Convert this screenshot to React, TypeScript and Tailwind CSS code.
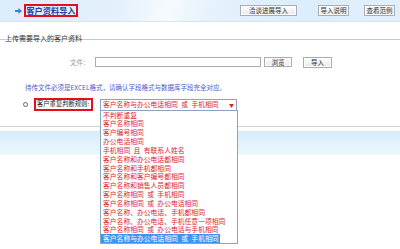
import React from "react";

const items = [
  "不判断重复",
  "客户名称相同",
  "客户编号相同",
  "办公电话相同",
  "手机相同\u2002且\u2002有联系人姓名",
  "客户名称和办公电话都相同",
  "客户名称和手机都相同",
  "客户名称和客户编号都相同",
  "客户名称和销售人员都相同",
  "客户名称相同\u2002或\u2002手机相同",
  "客户名称相同\u2002或\u2002办公电话相同",
  "客户名称、办公电话、手机都相同",
  "客户名称、办公电话、手机任意一项相同",
  "客户名称相同\u2002或\u2002办公电话与手机相同",
  "客户名称与办公电话相同\u2002或\u2002手机相同",
];

function Btn({ w, h = "h-[11px]", children }: { w: string; h?: string; children: React.ReactNode }) {
  return (
    <div
      className={`${w} ${h} flex items-center justify-center border border-[#a9adb3] bg-[linear-gradient(#ffffff,#e6e9ec)] text-[6.5px] leading-none text-[#333] shadow-[inset_0_0_0_1px_#ffffff]`}
    >
      {children}
    </div>
  );
}

export default function App() {
  return (
    <div className="relative h-[249px] w-[400px] overflow-hidden bg-white font-['Noto_Sans_CJK_SC','Liberation_Sans',sans-serif]">
      {/* header */}
      <div className="flex h-[22px] items-center border-b border-[#d4e6f6] bg-[linear-gradient(105deg,#dcedfb_0%,#e4f1fc_30%,#f6fbff_42%,#e6f2fc_52%,#dcedfb_75%,#e2f0fb_100%)]">
        <svg className="ml-[15px] h-[6px] w-[7px]" viewBox="0 0 7 6">
          <path d="M0 2h3.5V0L7 3 3.5 6V4H0z" fill="#2f86d8" />
        </svg>
        <div className="ml-[2px] flex h-[13px] w-[54px] items-center justify-center border-2 border-[#e3101c] text-[8.2px] font-bold leading-none text-[#2f3b9e]">
          客户资料导入
        </div>
        <div className="ml-auto mr-[5px] flex items-center">
          <Btn w="w-[57px]">洽谈进展导入</Btn>
          <div className="ml-[21px]">
            <Btn w="w-[31px]">导入说明</Btn>
          </div>
          <div className="ml-[15px]">
            <Btn w="w-[31px]">查看范例</Btn>
          </div>
        </div>
      </div>

      {/* legend */}
      <div className="mt-[11px] grid h-[12px]">
        <div className="[grid-area:1/1] mt-[6px] h-0 border-t border-[#c9c9c9]" />
        <div className="[grid-area:1/1] pl-[5px] text-[7px] leading-[11px] text-[#333]">上传需要导入的客户资料</div>
      </div>

      {/* file row */}
      <div className="mt-[12px] flex h-[10px] items-center">
        <div className="ml-[70px] w-[25px] text-[6.5px] leading-none text-[#999]">文件：</div>
        <div className="h-[10px] w-[166px] border border-[#a5adb8] bg-white" />
        <div className="ml-[3px]">
          <Btn w="w-[28px]" h="h-[10px]">浏览</Btn>
        </div>
        <div className="ml-[11px]">
          <Btn w="w-[29px]">导入</Btn>
        </div>
      </div>

      {/* note */}
      <div className="mt-[15px] h-[10px] pl-[25px] text-[6.5px] leading-[10px] text-[#4b5bd0]">
        待传文件必须是EXCEL格式，请确认字段格式与数据库字段完全对应。
      </div>

      {/* radio row */}
      <div className="mt-[6px] flex h-[13px] items-center">
        <div className="ml-[23px] h-[5px] w-[5px] rounded-full border border-[#666] bg-white" />
        <div className="ml-[6px] flex h-[13px] w-[59px] items-center border-2 border-[#e3101c] pl-[1px] text-[6.3px] leading-none whitespace-nowrap text-[#222]">
          客户重复判断规则:
        </div>
        <div className="relative ml-[7px] h-[12px] w-[137px]">
          <div className="flex h-[12px] w-[137px] items-center border border-[#8aa3bf] bg-white pl-[2px] text-[6.8px] leading-none whitespace-nowrap text-[#d9232b]">
            客户名称与办公电话相同{"\u2002"}或{"\u2002"}手机相同
            <span className="ml-auto mr-[2px] text-[5px] text-[#d9232b]">▼</span>
          </div>
          <div className="absolute left-0 top-[11px] z-10 w-[138px] border border-[#8aa3bf] bg-white">
            {items.map((t, i) => (
              <div
                key={i}
                className={
                  i === items.length - 1
                    ? "h-[8.85px] w-[119px] whitespace-nowrap bg-[#3d94f2] pl-[2px] text-[6.8px] leading-[8.85px] text-white"
                    : "h-[8.85px] whitespace-nowrap pl-[2px] text-[6.8px] leading-[8.85px] text-[#d9232b]"
                }
              >
                {t}
              </div>
            ))}
          </div>
        </div>
      </div>

      {/* next section */}
      <div className="mt-[15px] h-0 border-t border-[#d3d3d3]" />
      <div className="mt-[4px] h-[24px] bg-[linear-gradient(#d8ecfb,#edf7fe)]" />
    </div>
  );
}
